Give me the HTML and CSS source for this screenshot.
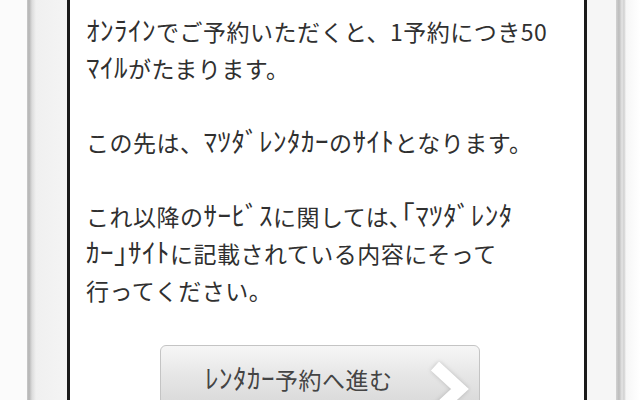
FILE: index.html
```html
<!DOCTYPE html>
<html lang="ja">
<head>
<meta charset="utf-8">
<link rel="stylesheet" href="styles.css">
</head>
<body>
<div class="page">
  <div class="gap-left"></div>
  <div class="bezel-left"></div>
  <div class="screen">
    <p class="para"><span class="hk">ｵﾝﾗｲﾝ</span>でご予約いただくと、1予約につき50<br><span class="hk">ﾏｲﾙ</span>がたまります。</p>
    <p class="para">この先は、<span class="hk">ﾏﾂﾀﾞﾚﾝﾀｶｰ</span>の<span class="hk">ｻｲﾄ</span>となります。</p>
    <p class="para">これ以降の<span class="hk">ｻｰﾋﾞｽ</span>に関しては､<span class="hk">｢ﾏﾂﾀﾞﾚﾝﾀ</span><br><span class="hk">ｶｰ｣ｻｲﾄ</span>に記載されている内容にそって<br>行ってください。</p>
    <div class="btn-row">
      <div class="btn">
        <span class="btn-label"><span class="hk">ﾚﾝﾀｶｰ</span>予約へ進む</span>
        <svg class="chev" width="40" height="54" viewBox="0 0 40 54">
          <polyline points="6,4 31,27 6,50" fill="none" stroke="#ffffff" stroke-width="12" stroke-linejoin="miter"/>
        </svg>
      </div>
    </div>
  </div>
  <div class="bezel-right"></div>
  <div class="gap-right"></div>
</div>
</body>
</html>
```
FILE: styles.css
```css
html, body {
  margin: 0;
  padding: 0;
  background: #ffffff;
  overflow: hidden;
}
.page {
  display: flex;
  height: 400px;
  width: 640px;
}
.gap-left {
  width: 27px;
  background: #fbfbfb;
}
.bezel-left {
  width: 40px;
  background: linear-gradient(to right, #c9c9c9 0px, #b4b4b4 2px, #dcdcdc 5px, #f0f0f0 9px, #f4f4f4 100%);
}
.screen {
  width: 498px;
  border-left: 3px solid #1a1a1a;
  border-right: 3px solid #1a1a1a;
  background: #ffffff;
  padding: 13px 0 0 16px;
  box-sizing: content-box;
  font-family: "Noto Sans CJK JP", "Noto Sans", sans-serif;
  color: #303030;
  font-size: 23px;
  letter-spacing: 0.5px;
  line-height: 37px;
}
.para {
  margin: 0 0 37px 0;
  white-space: nowrap;
}
.hk {
  font-size: 27px;
  letter-spacing: 0.5px;
  line-height: 20px;
}
.btn-row {
  display: flex;
  padding-left: 74px;
}
.btn {
  display: flex;
  align-items: center;
  width: 320px;
  height: 68px;
  border: 1px solid #c4c4c4;
  border-radius: 6px;
  background: linear-gradient(to bottom, #f6f6f6 0%, #e6e6e6 45%, #d6d6d6 100%);
  box-sizing: border-box;
  padding-left: 44px;
  margin-top: -1px;
}
.btn-label {
  color: #444444;
  letter-spacing: 0.5px;
}
.chev {
  margin-left: 36px;
  margin-top: 20px;
  filter: drop-shadow(0 0 2px rgba(0,0,0,0.18));
}
.bezel-right {
  width: 29px;
  background: #f6f6f6;
}
.gap-right {
  flex: 1;
  background: linear-gradient(to right, #d2d2d2 0px, #bcbcbc 3px, #e4e4e4 6px, #d0d0d0 8px, #f6f6f6 10px, #ffffff 100%);
}
```
